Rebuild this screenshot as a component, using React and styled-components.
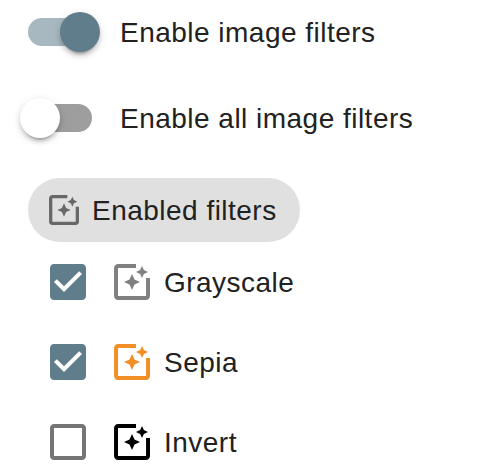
import React from "react";
import styled, { createGlobalStyle } from "styled-components";

const GlobalStyle = createGlobalStyle`
  body {
    margin: 0;
    background: #fff;
    color: #212121;
    font-family: "Liberation Sans", Arial, sans-serif;
    font-size: 28px;
    letter-spacing: 0.48px;
    line-height: 40px;
  }
`;

const Panel = styled.main`
  box-sizing: border-box;
  width: 486px;
  height: 476px;
  padding: 12px 20px 0;
  overflow: hidden;
`;

const SwitchRow = styled.label`
  display: flex;
  align-items: center;
  height: 40px;
  gap: 20px;
  margin-bottom: 46px;
`;

const SwitchTrack = styled.span`
  display: flex;
  align-items: center;
  justify-content: ${({ $on }) => ($on ? "flex-end" : "flex-start")};
  box-sizing: border-box;
  width: 64px;
  height: 28px;
  margin: 0 8px;
  border-radius: 14px;
  background: ${({ $on }) => ($on ? "#a7b8c1" : "#9e9e9e")};
`;

const SwitchThumb = styled.span`
  flex: none;
  width: 40px;
  height: 40px;
  margin: 0 -8px;
  border-radius: 50%;
  background: ${({ $on }) => ($on ? "#607d8b" : "#fff")};
  box-shadow: 0 6px 2px -4px rgba(0, 0, 0, 0.2), 0 4px 4px rgba(0, 0, 0, 0.14),
    0 2px 10px rgba(0, 0, 0, 0.12);
`;

const Label = styled.span`
  padding-top: 2px;
`;

const Chip = styled.div`
  display: flex;
  align-items: center;
  box-sizing: border-box;
  width: 272px;
  height: 64px;
  margin: -6px 0 0 8px;
  padding-left: 16px;
  gap: 8px;
  border-radius: 32px;
  background: #e0e0e0;
  white-space: nowrap;
`;

const FilterList = styled.div`
  display: flex;
  flex-direction: column;
  padding-left: 24px;
`;

const FilterRow = styled.label`
  display: flex;
  align-items: center;
  height: 80px;
`;

const Icon = styled.svg`
  flex: none;
  width: ${({ $size = 48 }) => $size}px;
  height: ${({ $size = 48 }) => $size}px;
  fill: ${({ $color }) => $color};
`;

const FilterName = styled(Label)`
  margin-left: 8px;
`;

const IconSlot = styled.span`
  display: flex;
  margin-left: 16px;
`;

function Switch({ on, children }) {
  return (
    <SwitchRow>
      <SwitchTrack $on={on}>
        <SwitchThumb $on={on} />
      </SwitchTrack>
      <Label>{children}</Label>
    </SwitchRow>
  );
}

function FilterIcon({ color, size }) {
  return (
    <Icon viewBox="0 0 24 24" $color={color} $size={size}>
      <path d="M19.02 10v9H5V5h9V3H5.02c-1.1 0-2 .9-2 2v14c0 1.1.9 2 2 2H19c1.1 0 2-.9 2-2v-9h-1.98zM17 10l.94-2.06L20 7l-2.06-.94L17 4l-.94 2.06L14 7l2.06.94L17 10zm-3.75.75L12 8l-1.25 2.75L8 12l2.75 1.25L12 16l1.25-2.75L16 12l-2.75-1.25z" />
    </Icon>
  );
}

function Checkbox({ checked }) {
  return (
    <Icon viewBox="0 0 24 24" $color={checked ? "#607d8b" : "#757575"}>
      <path
        d={
          checked
            ? "M19 3H5c-1.11 0-2 .9-2 2v14c0 1.1.89 2 2 2h14c1.11 0 2-.9 2-2V5c0-1.1-.89-2-2-2zm-9 14l-5-5 1.41-1.41L10 14.17l7.59-7.59L19 8l-9 9z"
            : "M19 5v14H5V5h14m0-2H5c-1.1 0-2 .9-2 2v14c0 1.1.9 2 2 2h14c1.1 0 2-.9 2-2V5c0-1.1-.9-2-2-2z"
        }
      />
    </Icon>
  );
}

const filters = [
  { name: "Grayscale", color: "#808080", checked: true },
  { name: "Sepia", color: "#f28e26", checked: true },
  { name: "Invert", color: "#000", checked: false },
];

export default function App() {
  return (
    <>
      <GlobalStyle />
      <Panel>
        <Switch on>Enable image filters</Switch>
        <Switch>Enable all image filters</Switch>
        <Chip>
          <FilterIcon color="#686868" size={40} />
          <Label>Enabled filters</Label>
        </Chip>
        <FilterList>
          {filters.map(({ name, color, checked }) => (
            <FilterRow key={name}>
              <Checkbox checked={checked} />
              <IconSlot>
                <FilterIcon color={color} />
              </IconSlot>
              <FilterName>{name}</FilterName>
            </FilterRow>
          ))}
        </FilterList>
      </Panel>
    </>
  );
}
